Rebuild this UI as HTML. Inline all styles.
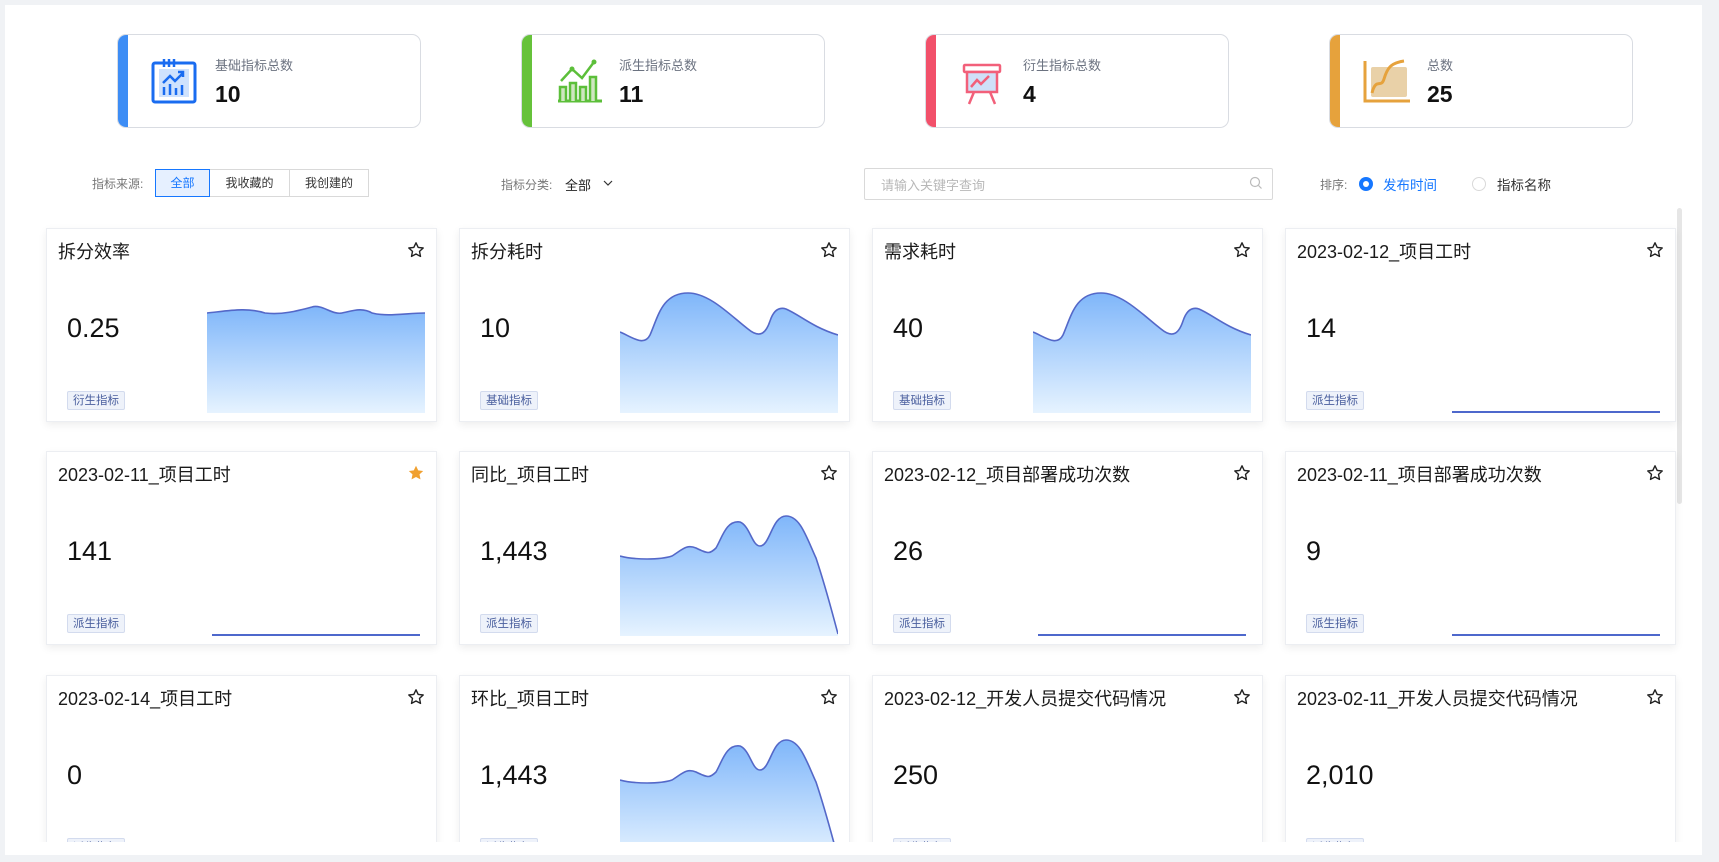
<!DOCTYPE html>
<html><head><meta charset="utf-8"><style>
*{box-sizing:border-box;margin:0;padding:0}
body{width:1719px;height:862px;background:#f0f2f5;font-family:"Liberation Sans","Noto Sans CJK SC",sans-serif;position:relative;overflow:hidden;color:#1f1f1f}
.panel{position:absolute;left:5px;top:5px;width:1697px;height:850px;background:#fff}
.stat{position:absolute;top:34px;width:304px;height:94px;border:1px solid #d9dce2;border-radius:9px;overflow:hidden;background:#fff}
.stat .bar{position:absolute;left:0;top:0;bottom:0;width:10px}
.stat svg{position:absolute;left:32px;top:22px}
.stat .lb{position:absolute;left:97px;top:20px;font-size:13px;color:#6b7280}
.stat .num{position:absolute;left:97px;top:46px;font-size:23px;font-weight:bold;color:#111}
.f{position:absolute;font-size:12px}
.seg{position:absolute;left:155px;top:169px;height:28px;display:flex;font-size:12px}
.seg div{border:1px solid #d9d9d9;line-height:26px;text-align:center;color:#333;margin-left:-1px}
.seg .on{border-color:#1677ff;color:#1677ff;background:#e6f0ff;position:relative;z-index:1}
.search{position:absolute;left:864px;top:168px;width:409px;height:32px;border:1px solid #d9d9d9;border-radius:2px;font-size:13px;color:#b8b8b8;padding:6px 16px}
.radio{position:absolute;top:177px;width:14px;height:14px;border-radius:50%}
.scroll{position:absolute;left:0;top:208px;width:1719px;height:634px;overflow:hidden}
.card{position:absolute;width:391px;height:194px;background:#fff;border:1px solid #eceef2;box-shadow:0 3px 8px rgba(0,0,0,.07)}
.card .t{position:absolute;left:11px;top:9px;font-size:18px;color:#1a1a1a}
.card .star{position:absolute;right:11px;top:12px}
.card .v{position:absolute;left:20px;top:84px;font-size:27px;color:#111}
.card .tag{position:absolute;left:20px;top:162px;height:19px;padding:0 5px;font-size:11.5px;line-height:18px;color:#4a5f9e;background:#eef2fa;border:1px solid #d3dbee;border-radius:2px}
.card .ch{position:absolute;left:160px;top:60px}
.card .fl{position:absolute;top:182px;height:2px;background:#4e68cc}
.sb{position:absolute;left:1677px;top:208px;width:5px;height:296px;background:#e6e6e6;border-radius:3px}
</style></head><body>
<div class="panel"></div>
<svg width="0" height="0" style="position:absolute"><defs><linearGradient id="g" x1="0" y1="0" x2="0" y2="1"><stop offset="0" stop-color="#7fb6fa"/><stop offset="1" stop-color="#e6f3ff"/></linearGradient>
<symbol id="st" viewBox="0 0 18 18"><path d="M9 1.8l2.2 4.6 5 .6-3.7 3.4 1 5L9 13l-4.5 2.4 1-5L1.8 7l5-.6z" fill="none" stroke="#222" stroke-width="1.4" stroke-linejoin="round"/></symbol></defs></svg>

<div class="stat" style="left:117px"><div class="bar" style="background:#3d8df5"></div>
<svg width="48" height="48" viewBox="0 0 48 48"><rect x="3" y="6" width="42" height="39" rx="2" fill="none" stroke="#1a6cf0" stroke-width="3"/><rect x="9" y="12" width="30" height="28" fill="#cfe2fd"/><path d="M14 2v8M19 2v8M24 2v8" stroke="#1a6cf0" stroke-width="2.5"/><path d="M13 26l7-7 5 5 8-8M28 15h5v5" fill="none" stroke="#1a6cf0" stroke-width="2.5"/><path d="M14 30v8M20 27v11M26 31v7M32 28v10" stroke="#1a6cf0" stroke-width="2.5"/></svg>
<div class="lb">基础指标总数</div><div class="num">10</div></div>
<div class="stat" style="left:521px"><div class="bar" style="background:#66c23a"></div>
<svg width="48" height="48" viewBox="0 0 48 48"><path d="M4 44h44" stroke="#5cbf3a" stroke-width="3"/><path d="M6 44V30h6v14M16 44V26h6v18M26 44V30h6v14M36 44V20h6v24" fill="#cfe6c0" stroke="#5cbf3a" stroke-width="2.5"/><path d="M7 24l11-12 10 9 12-16" fill="none" stroke="#5cbf3a" stroke-width="2.5"/><circle cx="18" cy="12" r="2.5" fill="#5cbf3a"/><circle cx="40" cy="5" r="2.5" fill="#5cbf3a"/></svg>
<div class="lb">派生指标总数</div><div class="num">11</div></div>
<div class="stat" style="left:925px"><div class="bar" style="background:#f2506a"></div>
<svg width="48" height="48" viewBox="0 0 48 48"><rect x="6" y="8" width="36" height="7" rx="1" fill="none" stroke="#f2607a" stroke-width="2.5"/><rect x="9" y="15" width="30" height="20" fill="#cfe0f8" stroke="#f2607a" stroke-width="2.5"/><path d="M13 30l6-7 4 4 8-8" fill="none" stroke="#f2607a" stroke-width="2.5"/><path d="M16 35l-5 12M32 35l5 12" stroke="#f2607a" stroke-width="2.5"/></svg>
<div class="lb">衍生指标总数</div><div class="num">4</div></div>
<div class="stat" style="left:1329px"><div class="bar" style="background:#e6a23c"></div>
<svg width="48" height="48" viewBox="0 0 48 48"><path d="M3 4v40h45" fill="none" stroke="#e6a23c" stroke-width="3"/><rect x="9" y="10" width="36" height="30" rx="2" fill="#e9d1a8"/><path d="M10 36c4-16 9-4 12-14s6-16 20-18" fill="none" stroke="#e6a23c" stroke-width="3"/></svg>
<div class="lb">总数</div><div class="num">25</div></div>

<div class="f" style="left:92px;top:175px;color:#777">指标来源:</div>
<div class="seg"><div class="on" style="width:55px;margin-left:0">全部</div><div style="width:81px">我收藏的</div><div style="width:80px">我创建的</div></div>
<div class="f" style="left:501px;top:176px;color:#777">指标分类:</div>
<div class="f" style="left:565px;top:175px;font-size:13px;color:#222">全部</div>
<svg style="position:absolute;left:602px;top:178px" width="12" height="10"><path d="M2 3l4 4 4-4" fill="none" stroke="#333" stroke-width="1.2"/></svg>
<div class="search">请输入关键字查询</div>
<svg style="position:absolute;left:1249px;top:176px" width="14" height="14"><circle cx="6" cy="6" r="4.5" fill="none" stroke="#bbb" stroke-width="1.2"/><path d="M9.5 9.5l3 3" stroke="#bbb" stroke-width="1.2"/></svg>
<div class="f" style="left:1320px;top:176px;color:#777">排序:</div>
<div class="radio" style="left:1359px;background:#1677ff"><div style="margin:4px;width:6px;height:6px;border-radius:50%;background:#fff"></div></div>
<div class="f" style="left:1383px;top:174px;font-size:13.5px;color:#1677ff">发布时间</div>
<div class="radio" style="left:1472px;border:1px solid #d9d9d9"></div>
<div class="f" style="left:1497px;top:174px;font-size:13.5px;color:#333">指标名称</div>
<div class="sb"></div>

<div class="scroll">
<div class="card" style="left:46px;top:20px"><div class="t">拆分效率</div><svg class="star" width="18" height="18"><use href="#st"/></svg><div class="v">0.25</div><div class="tag">衍生指标</div>
<svg class="ch" width="218" height="124" viewBox="0 0 218 124"><path d="M0 24C20 22 40 18 58 24C75 26 90 22 105 18C115 15 125 26 135 24C145 22 155 18 165 24C180 28 200 24 218 24V124H0Z" fill="url(#g)"/><path d="M0 24C20 22 40 18 58 24C75 26 90 22 105 18C115 15 125 26 135 24C145 22 155 18 165 24C180 28 200 24 218 24" fill="none" stroke="#5468c8" stroke-width="1.6"/></svg></div>
<div class="card" style="left:459px;top:20px"><div class="t">拆分耗时</div><svg class="star" width="18" height="18"><use href="#st"/></svg><div class="v">10</div><div class="tag">基础指标</div>
<svg class="ch" width="218" height="124" viewBox="0 0 218 124"><path d="M0 43C12 48 24 58 30 46C38 28 42 4 68 4C90 4 112 28 128 40C140 50 146 44 150 32C154 20 160 18 166 20C180 26 192 38 218 46V124H0Z" fill="url(#g)"/><path d="M0 43C12 48 24 58 30 46C38 28 42 4 68 4C90 4 112 28 128 40C140 50 146 44 150 32C154 20 160 18 166 20C180 26 192 38 218 46" fill="none" stroke="#5468c8" stroke-width="1.6"/></svg></div>
<div class="card" style="left:872px;top:20px"><div class="t">需求耗时</div><svg class="star" width="18" height="18"><use href="#st"/></svg><div class="v">40</div><div class="tag">基础指标</div>
<svg class="ch" width="218" height="124" viewBox="0 0 218 124"><path d="M0 43C12 48 24 58 30 46C38 28 42 4 68 4C90 4 112 28 128 40C140 50 146 44 150 32C154 20 160 18 166 20C180 26 192 38 218 46V124H0Z" fill="url(#g)"/><path d="M0 43C12 48 24 58 30 46C38 28 42 4 68 4C90 4 112 28 128 40C140 50 146 44 150 32C154 20 160 18 166 20C180 26 192 38 218 46" fill="none" stroke="#5468c8" stroke-width="1.6"/></svg></div>
<div class="card" style="left:1285px;top:20px"><div class="t">2023-02-12_项目工时</div><svg class="star" width="18" height="18"><use href="#st"/></svg><div class="v">14</div><div class="tag">派生指标</div><div class="fl" style="left:166px;width:208px"></div></div>
<div class="card" style="left:46px;top:243px"><div class="t">2023-02-11_项目工时</div><svg class="star" width="18" height="18" viewBox="0 0 18 18"><path d="M9 1.8l2.2 4.6 5 .6-3.7 3.4 1 5L9 13l-4.5 2.4 1-5L1.8 7l5-.6z" fill="#f0a030"/></svg><div class="v">141</div><div class="tag">派生指标</div><div class="fl" style="left:165px;width:208px"></div></div>
<div class="card" style="left:459px;top:243px"><div class="t">同比_项目工时</div><svg class="star" width="18" height="18"><use href="#st"/></svg><div class="v">1,443</div><div class="tag">派生指标</div>
<svg class="ch" width="218" height="124" viewBox="0 0 218 124"><path d="M0 44C15 48 40 48 52 44C62 38 66 32 76 36C88 42 90 42 96 36C102 26 106 8 120 10C130 14 132 34 140 34C150 34 152 4 166 4C180 4 186 24 196 46C206 76 212 100 218 122V124H0Z" fill="url(#g)"/><path d="M0 44C15 48 40 48 52 44C62 38 66 32 76 36C88 42 90 42 96 36C102 26 106 8 120 10C130 14 132 34 140 34C150 34 152 4 166 4C180 4 186 24 196 46C206 76 212 100 218 122" fill="none" stroke="#5468c8" stroke-width="1.6"/></svg></div>
<div class="card" style="left:872px;top:243px"><div class="t">2023-02-12_项目部署成功次数</div><svg class="star" width="18" height="18"><use href="#st"/></svg><div class="v">26</div><div class="tag">派生指标</div><div class="fl" style="left:165px;width:208px"></div></div>
<div class="card" style="left:1285px;top:243px"><div class="t">2023-02-11_项目部署成功次数</div><svg class="star" width="18" height="18"><use href="#st"/></svg><div class="v">9</div><div class="tag">派生指标</div><div class="fl" style="left:166px;width:208px"></div></div>
<div class="card" style="left:46px;top:467px"><div class="t">2023-02-14_项目工时</div><svg class="star" width="18" height="18"><use href="#st"/></svg><div class="v">0</div><div class="tag">派生指标</div></div>
<div class="card" style="left:459px;top:467px"><div class="t">环比_项目工时</div><svg class="star" width="18" height="18"><use href="#st"/></svg><div class="v">1,443</div><div class="tag">派生指标</div>
<svg class="ch" width="218" height="124" viewBox="0 0 218 124"><path d="M0 44C15 48 40 48 52 44C62 38 66 32 76 36C88 42 90 42 96 36C102 26 106 8 120 10C130 14 132 34 140 34C150 34 152 4 166 4C180 4 186 24 196 46C206 76 212 100 218 122V124H0Z" fill="url(#g)"/><path d="M0 44C15 48 40 48 52 44C62 38 66 32 76 36C88 42 90 42 96 36C102 26 106 8 120 10C130 14 132 34 140 34C150 34 152 4 166 4C180 4 186 24 196 46C206 76 212 100 218 122" fill="none" stroke="#5468c8" stroke-width="1.6"/></svg></div>
<div class="card" style="left:872px;top:467px"><div class="t">2023-02-12_开发人员提交代码情况</div><svg class="star" width="18" height="18"><use href="#st"/></svg><div class="v">250</div><div class="tag">派生指标</div></div>
<div class="card" style="left:1285px;top:467px"><div class="t">2023-02-11_开发人员提交代码情况</div><svg class="star" width="18" height="18"><use href="#st"/></svg><div class="v">2,010</div><div class="tag">派生指标</div></div>
</div>
</body></html>
